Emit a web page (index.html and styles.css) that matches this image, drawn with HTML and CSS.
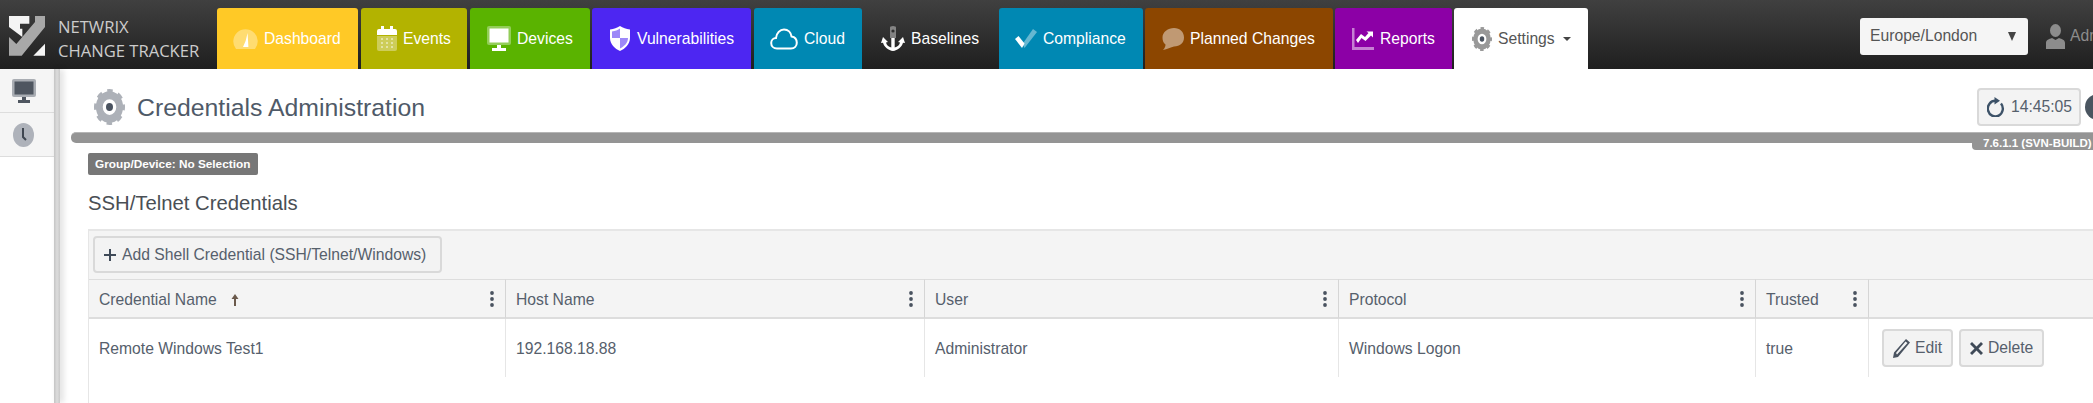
FILE: index.html
```html
<!DOCTYPE html>
<html>
<head>
  <title>Credentials Administration</title>
  <link rel="stylesheet" href="styles.css">
</head>
<body>
  <svg class="defs" width="0" height="0">
    <symbol id="gear" viewBox="0 0 32 32" preserveAspectRatio="none">
      <circle cx="16" cy="16" r="10.5" fill="none" stroke="currentColor" stroke-width="7"/>
      <circle cx="16" cy="16" r="13.5" fill="none" stroke="currentColor" stroke-width="5" stroke-dasharray="5.3 5.3" stroke-dashoffset="2.6"/>
      <circle cx="16" cy="16" r="3.6" fill="#4a5360"/>
    </symbol>
    <symbol id="kebab" viewBox="0 0 4 16">
      <circle cx="2" cy="2" r="1.9"/>
      <circle cx="2" cy="8" r="1.9"/>
      <circle cx="2" cy="14" r="1.9"/>
    </symbol>
  </svg>

  <div class="page">
    <!-- top bar -->
    <header class="nav">
      <div class="brand">
        <svg class="brand-logo" viewBox="0 0 108 121">
          <path fill="#f4f4f4" d="M0 2H61V25H33V40L40 40V65L0 35Z"/>
          <path fill="#a8a8a8" d="M78 2H108V35L38 121H0V65L22 86L78 20Z"/>
          <path fill="#f4f4f4" d="M108 85V121H73Z"/>
        </svg>
        <div class="brand-name">NETWRIX<br>CHANGE TRACKER</div>
      </div>

      <nav class="tabs">
        <a class="tab tab-dashboard">
          <svg class="ico" width="25" height="22" viewBox="0 0 25 22">
            <path fill="#fff" fill-opacity=".35" d="M3 21A12.2 12.2 0 1 1 22 21Z"/>
            <path fill="#fff" d="M14.6 5 15.4 19H10L12.6 13Z"/>
          </svg>
          Dashboard
        </a>
        <a class="tab tab-events">
          <svg class="ico" width="20" height="25" viewBox="0 0 20 25">
            <path fill="#fff" fill-opacity=".35" d="M0 10H20V23a2 2 0 0 1-2 2H2a2 2 0 0 1-2-2Z"/>
            <path fill="#fff" d="M2 3H4V0H7V3H13V0H16V3H18a2 2 0 0 1 2 2V9H0V5a2 2 0 0 1 2-2Z"/>
            <path fill="#fff" fill-opacity=".45" d="M4 12h2v2H4zM9 12h2v2H9zM14 12h2v2h-2zM4 16h2v2H4zM9 16h2v2H9zM14 16h2v2h-2zM4 20h2v2H4zM9 20h2v2H9zM14 20h2v2h-2z"/>
          </svg>
          Events
        </a>
        <a class="tab tab-devices">
          <svg class="ico" width="24" height="25" viewBox="0 0 24 25">
            <rect width="24" height="19" rx="2" fill="#fff" fill-opacity=".35"/>
            <rect x="2.5" y="2.5" width="19" height="14" fill="#fff"/>
            <path fill="#fff" d="M10 19H14V22H19V25H5V22H10Z"/>
          </svg>
          Devices
        </a>
        <a class="tab tab-vuln">
          <svg class="ico" width="20" height="25" viewBox="0 0 20 25">
            <path fill="#fff" d="M10 0C13 2 16 3 20 3.500V12C20 18 15 23 10 25 5 23 0 18 0 12V3.500C4 3 7 2 10 0Z"/>
            <path fill="#4d26f2" fill-opacity=".55" d="M10 2.500V12H2V5.500C5 5 8 4 10 2.500ZM10 12H18C18 17 14 20.500 10 22.500Z"/>
          </svg>
          Vulnerabilities
        </a>
        <a class="tab tab-cloud">
          <svg class="ico" width="28" height="22" viewBox="0 0 28 22">
            <path fill="none" stroke="#fff" stroke-width="2" d="M7 20.500C3.500 20.500 1.200 18 1.200 15 1.200 12 3.500 10 6 10 6.500 5 10 1.500 14 1.500 18 1.500 21 4.500 21.500 8.500 24.500 9 26.800 11.500 26.800 14.800 26.800 18 24.500 20.500 21 20.500Z"/>
          </svg>
          Cloud
        </a>
        <a class="tab tab-baselines">
          <svg class="ico" width="24" height="25" viewBox="0 0 24 25">
            <path fill="#fff" fill-opacity=".4" d="M9 1.500a3 1.500 0 0 1 6 0V12H9Z"/>
            <circle cx="12" cy="5" r="1.600" fill="#2f2f2f"/>
            <path fill="#fff" d="M10.300 12H13.700V21.500C16.500 21 18.500 19 19 16.500L17 16 22 11 24 17 22 16.800C21 21 16.500 24.500 12 25 7.500 24.500 3 21 2 16.800L0 17 2 11 7 16 5 16.500C5.500 19 7.500 21 10.300 21.500Z"/>
          </svg>
          Baselines
        </a>
        <a class="tab tab-compliance">
          <svg class="ico" width="22" height="19" viewBox="0 0 22 19">
            <path fill="#fff" d="M0 10 3.500 7 9.500 14.500 7 19Z"/>
            <path fill="#fff" fill-opacity=".4" d="M7.500 15 18 0 22 3 9.500 19Z"/>
          </svg>
          Compliance
        </a>
        <a class="tab tab-planned">
          <svg class="ico" width="22" height="22" viewBox="0 0 22 22">
            <path fill="#fff" fill-opacity=".45" d="M12 0C18 0 22 4 22 9.500 22 15 18 18 12 18.500 9 19 5 21.500 1 22 3 20 3.500 18 3.500 16.500 1 14.500 0.500 12 0.500 9.500 0.500 4 6 0 12 0Z"/>
          </svg>
          Planned Changes
        </a>
        <a class="tab tab-reports">
          <svg class="ico" width="22" height="22" viewBox="0 0 22 22">
            <path fill="#fff" fill-opacity=".5" d="M0 0H2.500V19H22V22H0Z"/>
            <path fill="#fff" d="M4 12 9 6 13 9 16.500 5 14.500 3.500H21V9.500L19 7.500 13.500 13 9.500 10 6 15Z"/>
          </svg>
          Reports
        </a>
        <a class="tab tab-settings">
          <svg class="ico" width="20" height="24"><use href="#gear"/></svg>
          Settings
          <span class="caret"></span>
        </a>
      </nav>

      <div class="nav-right">
        <div class="tz-select">Europe/London<span class="tz-arrow"></span></div>
        <div class="user">
          <svg class="ico" width="19" height="25" viewBox="0 0 19 25">
            <ellipse cx="9.500" cy="6.500" rx="5.500" ry="6.500" fill="#8c8c8c"/>
            <path fill="#8c8c8c" d="M0 25V19C0 16 3 15 6 14L9.500 16 13 14C16 15 19 16 19 19V25Z"/>
          </svg>
          Adm
        </div>
      </div>
    </header>

    <div class="content">
      <aside class="side">
        <div class="side-item">
          <svg width="24" height="24" viewBox="0 0 24 24">
            <rect width="24" height="18" rx="2" fill="#a9adb3"/>
            <rect x="2.500" y="2.500" width="19" height="13" fill="#4f5660"/>
            <path fill="#4f5660" d="M10 18H14V21H18V24H6V21H10Z"/>
          </svg>
        </div>
        <div class="side-item">
          <svg width="21" height="24" viewBox="0 0 21 24">
            <ellipse cx="10.500" cy="12" rx="10.500" ry="12" fill="#aeb2ba"/>
            <path fill="none" stroke="#3f4650" stroke-width="2" d="M10 5V14L13 17"/>
          </svg>
        </div>
      </aside>
      <div class="side-strip"></div>

      <main class="main">
        <div class="title-row">
          <svg class="title-gear" width="31" height="36"><use href="#gear"/></svg>
          <h1 class="title">Credentials Administration</h1>
          <div class="btn refresh-btn">
            <svg width="18" height="20" viewBox="0 0 18 20">
              <path fill="none" stroke="#3d5268" stroke-width="2.400" d="M14 6.500A7.500 7.800 0 1 1 8.500 3.800"/>
              <path fill="#3d5268" d="M7.500 0 13 3.800 7.500 7.500Z"/>
            </svg>
            14:45:05
          </div>
          <div class="round-btn"></div>
        </div>

        <div class="title-bar">
          <div class="version">7.6.1.1 (SVN-BUILD)</div>
        </div>

        <div class="body">
          <span class="badge">Group/Device: No Selection</span>
          <h2 class="subtitle">SSH/Telnet Credentials</h2>

          <div class="panel">
            <div class="toolbar">
              <div class="btn add-btn">
                <svg width="12" height="12" viewBox="0 0 12 12">
                  <path fill="#3f4a58" d="M5 0H7V5H12V7H7V12H5V7H0V5H5Z"/>
                </svg>
                Add Shell Credential (SSH/Telnet/Windows)
              </div>
            </div>

            <div class="grid">
              <div class="hcell">
                Credential Name
                <svg class="sort" width="8" height="12" viewBox="0 0 8 12">
                  <path fill="#6b5a4c" d="M4 0 7.500 5H5V12H3V5H0.500Z"/>
                </svg>
                <svg class="kebab"><use href="#kebab"/></svg>
              </div>
              <div class="hcell">Host Name<svg class="kebab"><use href="#kebab"/></svg></div>
              <div class="hcell">User<svg class="kebab"><use href="#kebab"/></svg></div>
              <div class="hcell">Protocol<svg class="kebab"><use href="#kebab"/></svg></div>
              <div class="hcell">Trusted<svg class="kebab"><use href="#kebab"/></svg></div>
              <div class="hcell hcell-last"></div>

              <div class="cell">Remote Windows Test1</div>
              <div class="cell">192.168.18.88</div>
              <div class="cell">Administrator</div>
              <div class="cell">Windows Logon</div>
              <div class="cell">true</div>
              <div class="cell cell-actions">
                <div class="btn row-btn edit-btn">
                  <svg width="17" height="19" viewBox="0 0 17 19">
                    <path fill="#4a5360" d="M13 0 17 3.500 5 18 0 19 1 13.500ZM12.500 2.500 3 14 4 15.500 14.500 4Z"/>
                  </svg>
                  Edit
                </div>
                <div class="btn row-btn delete-btn">
                  <svg width="13" height="13" viewBox="0 0 13 13">
                    <path fill="#3f4a58" d="M2 0 6.500 4.500 11 0 13 2 8.500 6.500 13 11 11 13 6.500 8.500 2 13 0 11 4.500 6.500 0 2Z"/>
                  </svg>
                  Delete
                </div>
              </div>
            </div>
          </div>
        </div>
      </main>
    </div>
  </div>
</body>
</html>
```

FILE: styles.css
```css
html, body {
  margin: 0;
  padding: 0;
  background-color: #ffffff;
}

body {
  font-family: "Liberation Sans", Arial, sans-serif;
  font-size: 15.7px;
  color: #56606c;
}

.defs {
  display: block;
  height: 0;
}

.page {
  width: 2093px;
  height: 403px;
  overflow: hidden;
  display: flex;
  flex-direction: column;
}

/* top bar */
.nav {
  display: flex;
  flex: none;
  height: 69px;
  background: linear-gradient(#404040, #1f1f1f);
}

.brand {
  display: flex;
  flex: none;
  width: 217px;
  box-sizing: border-box;
  padding: 15px 0 0 9px;
  gap: 13px;
}

.brand-logo {
  width: 36px;
  height: 41px;
}

.brand-name {
  font-family: "Open Sans", "Noto Sans", sans-serif;
  font-size: 16.6px;
  line-height: 24px;
  color: #cccccc;
  white-space: nowrap;
}

.tabs {
  display: flex;
  flex: none;
  padding-top: 8px;
}

.tab {
  display: flex;
  align-items: center;
  gap: 6px;
  box-sizing: border-box;
  padding-left: 16px;
  margin-right: 3px;
  border-radius: 3px 3px 0 0;
  color: #ffffff;
  white-space: nowrap;
}

.ico {
  flex: none;
}

.tab-dashboard { width: 141px; background-color: #ffc926; }
.tab-events { width: 106px; background-color: #b3b300; }
.tab-devices { width: 120px; padding-left: 17px; background-color: #5ab300; margin-right: 2px; }
.tab-vuln { width: 159px; padding-left: 18px; gap: 7px; background-color: #4d26f2; }
.tab-cloud { width: 108px; background-color: #0088b3; margin-right: 0; }
.tab-baselines { width: 137px; padding-left: 19px; margin-right: 0; }
.tab-compliance { width: 144px; background-color: #0088b3; margin-right: 2px; }
.tab-planned { width: 188px; padding-left: 17px; background-color: #8c4600; margin-right: 2px; }
.tab-reports { width: 117px; padding-left: 17px; background-color: #8c00a6; margin-right: 2px; }

.tab-settings {
  width: 134px;
  padding-left: 18px;
  background-color: #ffffff;
  color: #555555;
  margin-right: 0;
}

.tab-settings .ico {
  color: #999999;
}

.caret {
  width: 0;
  height: 0;
  margin-left: 2px;
  border-top: 4px solid #444444;
  border-left: 4px solid transparent;
  border-right: 4px solid transparent;
}

.nav-right {
  display: flex;
  flex: none;
  align-items: center;
  margin-left: 272px;
  padding-top: 3px;
}

.tz-select {
  display: flex;
  align-items: center;
  justify-content: space-between;
  width: 168px;
  height: 37px;
  box-sizing: border-box;
  padding: 0 12px 0 10px;
  background-color: #f5f5f5;
  border-radius: 3px;
  color: #555555;
}

.tz-arrow {
  width: 0;
  height: 0;
  border-top: 9px solid #444444;
  border-left: 4px solid transparent;
  border-right: 4px solid transparent;
}

.user {
  display: flex;
  align-items: center;
  gap: 5px;
  margin-left: 18px;
  color: #8c8c8c;
}

/* below the bar */
.content {
  display: flex;
  flex: 1;
  min-height: 0;
}

.side {
  flex: none;
  width: 54px;
}

.side-item {
  display: flex;
  align-items: center;
  justify-content: center;
  height: 44px;
  background-color: #f5f5f5;
  border-bottom: 1px solid #dddddd;
}

.side-item:first-child {
  padding-right: 6px;
  box-sizing: border-box;
  height: 44px;
}

.side-item:nth-child(2) {
  padding-right: 8px;
  box-sizing: border-box;
}

.side-strip {
  flex: none;
  width: 6px;
  background: linear-gradient(to right, #c4c4c4, #dcdcdc 50%, #c9c9c9);
  box-shadow: 3px 0 6px rgba(0, 0, 0, 0.14);
}

.main {
  flex: 1;
  min-width: 0;
  padding-left: 11px;
}

.title-row {
  display: flex;
  align-items: center;
  height: 63px;
  box-sizing: border-box;
  padding: 13px 0 0 23px;
}

.title-gear {
  flex: none;
  color: #adb1b8;
}

.title {
  margin: 0 0 0 12px;
  padding-top: 2px;
  font-size: 24.8px;
  font-weight: normal;
  color: #4f5a68;
}

.btn {
  display: flex;
  align-items: center;
  box-sizing: border-box;
  background-color: #f3f3f3;
  border: 2px solid #d9d9d9;
  border-radius: 4px;
  white-space: nowrap;
}

.refresh-btn {
  flex: none;
  width: 104px;
  height: 38px;
  margin-left: auto;
  padding-left: 8px;
  gap: 6px;
}

.round-btn {
  flex: none;
  width: 26px;
  height: 26px;
  margin: 0 -18px 0 4px;
  border-radius: 50%;
  background-color: #4a5560;
}

.title-bar {
  position: relative;
  height: 10px;
  background-color: #949494;
  border-top: 1px solid #b5b5b5;
  border-radius: 5px 0 0 5px;
}

.version {
  position: absolute;
  top: 4px;
  right: 0;
  width: 121px;
  height: 13px;
  box-sizing: border-box;
  padding-left: 11px;
  background-color: #949494;
  border-radius: 0 0 0 4px;
  color: #ffffff;
  font-size: 11.5px;
  font-weight: bold;
  line-height: 13px;
  white-space: nowrap;
}

.body {
  padding: 10px 0 0 17px;
}

.badge {
  display: block;
  width: 170px;
  height: 22px;
  box-sizing: border-box;
  padding-left: 7px;
  background-color: #777777;
  border-radius: 2px;
  color: #ffffff;
  font-size: 11.8px;
  font-weight: bold;
  line-height: 22px;
  white-space: nowrap;
}

.subtitle {
  margin: 16px 0 14px;
  font-size: 20.3px;
  font-weight: normal;
  line-height: 24px;
  color: #4a4f55;
}

.panel {
  height: 180px;
  border-left: 1px solid #e6e6e6;
}

.toolbar {
  height: 50px;
  box-sizing: border-box;
  padding: 5px 4px;
  background-color: #f4f4f4;
  border-top: 2px solid #e6e6e6;
}

.add-btn {
  width: 349px;
  height: 37px;
  padding-left: 9px;
  gap: 6px;
}

.grid {
  display: grid;
  grid-template-columns: 417px 419px 414px 417px 113px 1fr;
}

.hcell {
  display: flex;
  align-items: center;
  gap: 10px;
  height: 40px;
  box-sizing: border-box;
  padding: 3px 11px 0 10px;
  background-color: #f4f4f4;
  border-top: 1px solid #dddddd;
  border-bottom: 2px solid #dddddd;
  border-right: 1px solid #d5d5d5;
}

.hcell-last {
  border-right: 0;
}

.sort {
  flex: none;
  margin-left: 4px;
}

.kebab {
  flex: none;
  width: 4px;
  height: 16px;
  margin: -3px 0 0 auto;
  fill: #4a5360;
}

.cell {
  display: flex;
  align-items: center;
  height: 58px;
  box-sizing: border-box;
  padding: 2px 0 0 10px;
  border-right: 1px solid #e6e6e6;
}

.cell-actions {
  gap: 6px;
  padding: 0 0 0 13px;
  border-right: 0;
}

.row-btn {
  height: 38px;
  padding-left: 9px;
  gap: 5px;
}

.edit-btn {
  width: 71px;
}

.delete-btn {
  width: 85px;
}
```
